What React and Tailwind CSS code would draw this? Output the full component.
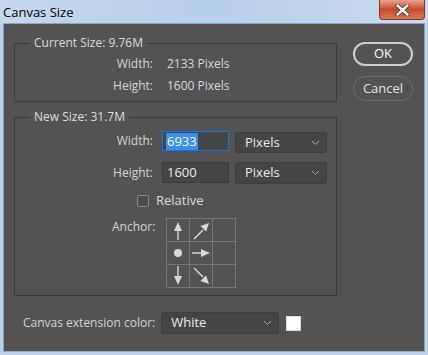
import React from 'react';

const font = { fontFamily: '"Open Sans", "Noto Sans", sans-serif' };

function Arrow({ kind }) {
  // small white arrows inside the anchor grid
  const c = '#d8d8d8';
  if (kind === 'dot') {
    return (
      <svg width="22" height="22" viewBox="0 0 22 22">
        <circle cx="11" cy="11" r="4" fill={c} />
      </svg>
    );
  }
  const shapes = {
    up: { line: [11, 21, 11, 10], head: '11,3 7,12 15,12' },
    down: { line: [11, 1, 11, 12], head: '11,20 7,11 15,11' },
    right: { line: [2, 11, 12, 11], head: '20,11 11,7 11,15' },
    ne: { line: [4, 20, 13, 11], head: '19,4 16.1,12.5 10.5,6.9' },
    se: { line: [4, 3, 13, 12], head: '19,19 16.1,10.5 10.5,16.1' },
  };
  const s = shapes[kind];
  return (
    <svg width="22" height="22" viewBox="0 0 22 22">
      <line x1={s.line[0]} y1={s.line[1]} x2={s.line[2]} y2={s.line[3]} stroke={c} strokeWidth="1.4" />
      <polygon points={s.head} fill={c} />
    </svg>
  );
}

function Chevron() {
  return (
    <svg width="9" height="6" viewBox="0 0 9 6" className="shrink-0">
      <path d="M1 1 L4.5 4.5 L8 1" fill="none" stroke="#a8a8a8" strokeWidth="1" />
    </svg>
  );
}

function Select({ value, className }) {
  return (
    <div
      className={`flex items-center justify-between rounded-[3px] border border-[#3e3e3e] bg-[#454545] pl-[9px] pr-[6px] text-[13px] text-[#ececec] ${className}`}
    >
      <span>{value}</span>
      <Chevron />
    </div>
  );
}

export default function App() {
  const anchor = ['up', 'ne', null, 'dot', 'right', null, 'down', 'se', null];

  return (
    <div className="w-[428px] h-[355px] flex flex-col bg-[#bcd3ea] overflow-hidden" style={font}>
      {/* title bar */}
      <div className="h-[23px] flex items-start justify-between bg-gradient-to-r from-[#c3d8ee] via-[#b6cfe9] to-[#c9dcef]">
        <span className="pl-[3px] pt-[4px] text-[13px] leading-[16px] text-black">Canvas Size</span>
        <div className="mr-[3px] w-[46px] h-[20px] flex items-center justify-center rounded-b-[4px] border border-t-0 border-[#7a3a30] bg-gradient-to-b from-[#e9a592] via-[#c8452c] to-[#d67a58]">
          <svg width="15" height="12" viewBox="0 0 15 12">
            <path d="M2.5 1.5 L12.5 10.5 M12.5 1.5 L2.5 10.5" stroke="#4a1f18" strokeWidth="4.2" strokeLinecap="round" />
            <path d="M2.5 1.5 L12.5 10.5 M12.5 1.5 L2.5 10.5" stroke="#ffffff" strokeWidth="2.6" strokeLinecap="round" />
          </svg>
        </div>
      </div>

      {/* dialog body */}
      <div className="flex-1 mx-[3px] mb-[3px] border border-[#8ea5bf] bg-[#535353] text-[12px] text-[#d4d4d4] flex flex-col">
        <div className="flex">
          <div className="ml-[10px] w-[323px] flex flex-col">
            {/* current size */}
            <fieldset className="mt-[11px] border border-[#3b3b3b] pb-[4px]">
              <legend className="ml-[15px] px-[4px] leading-[16px] text-[#dcdcdc]">Current Size: 9.76M</legend>
              <div className="mt-[2px] flex items-center h-[22px]">
                <span className="w-[138px] text-right">Width:</span>
                <span className="ml-[14px] text-[#d8d8d8]">2133 Pixels</span>
              </div>
              <div className="flex items-center h-[22px]">
                <span className="w-[138px] text-right">Height:</span>
                <span className="ml-[14px] text-[#d8d8d8]">1600 Pixels</span>
              </div>
            </fieldset>

            {/* new size */}
            <fieldset className="mt-[7px] border border-[#3b3b3b] pb-[7px]">
              <legend className="ml-[15px] px-[4px] leading-[16px] text-[#dcdcdc]">New Size: 31.7M</legend>
              <div className="mt-[6px] flex items-start h-[22px]">
                <span className="w-[138px] text-right leading-[20px]">Width:</span>
                <div className="ml-[9px] w-[67px] h-[20px] border border-[#1473e6] bg-[#454545] flex items-center pl-[3px]">
                  <span className="bg-[#3390f5] text-white text-[13px] leading-[17px] px-px">6933</span>
                </div>
                <Select value="Pixels" className="ml-[6px] mt-px w-[92px] h-[21px]" />
              </div>
              <div className="mt-[9px] flex items-start h-[22px]">
                <span className="w-[138px] text-right leading-[21px]">Height:</span>
                <div className="ml-[9px] w-[67px] h-[21px] border border-[#3b3b3b] bg-[#454545] flex items-center pl-[4px] text-[13px] text-[#ececec]">
                  1600
                </div>
                <Select value="Pixels" className="ml-[6px] w-[92px] h-[22px]" />
              </div>
              <div className="mt-[10px] flex items-center h-[14px]">
                <span className="ml-[122px] w-[12px] h-[12px] rounded-[2px] border border-[#8a8a8a] bg-[#4c4c4c]" />
                <span className="ml-[7px] text-[13px] text-[#dcdcdc]">Relative</span>
              </div>
              <div className="mt-[10px] flex items-start">
                <span className="ml-[97px] mt-[1px] leading-[16px]">Anchor:</span>
                <div className="ml-[11px] grid grid-cols-3 border-l border-t border-[#767676]">
                  {anchor.map((a, i) => (
                    <div key={i} className="w-[23px] h-[23px] border-r border-b border-[#767676] flex items-center justify-center">
                      {a && <Arrow kind={a} />}
                    </div>
                  ))}
                </div>
              </div>
            </fieldset>
          </div>

          {/* buttons */}
          <div className="ml-[16px] mt-[18px] flex flex-col gap-[10px]">
            <button className="w-[60px] h-[24px] rounded-full border-2 border-[#cfcfcf] text-[13px] text-white">OK</button>
            <button className="w-[60px] h-[25px] rounded-full border-[1.5px] border-[#6f6f6f] text-[13px] text-[#e4e4e4]">Cancel</button>
          </div>
        </div>

        {/* extension colour */}
        <div className="mt-[16px] flex items-center">
          <span className="ml-[19px] text-[12px] text-[#d4d4d4]">Canvas extension color:</span>
          <Select value="White" className="ml-[6px] w-[118px] h-[22px]" />
          <span className="ml-[7px] w-[15px] h-[15px] bg-white border border-[#dcdcdc]" />
        </div>
      </div>
    </div>
  );
}
